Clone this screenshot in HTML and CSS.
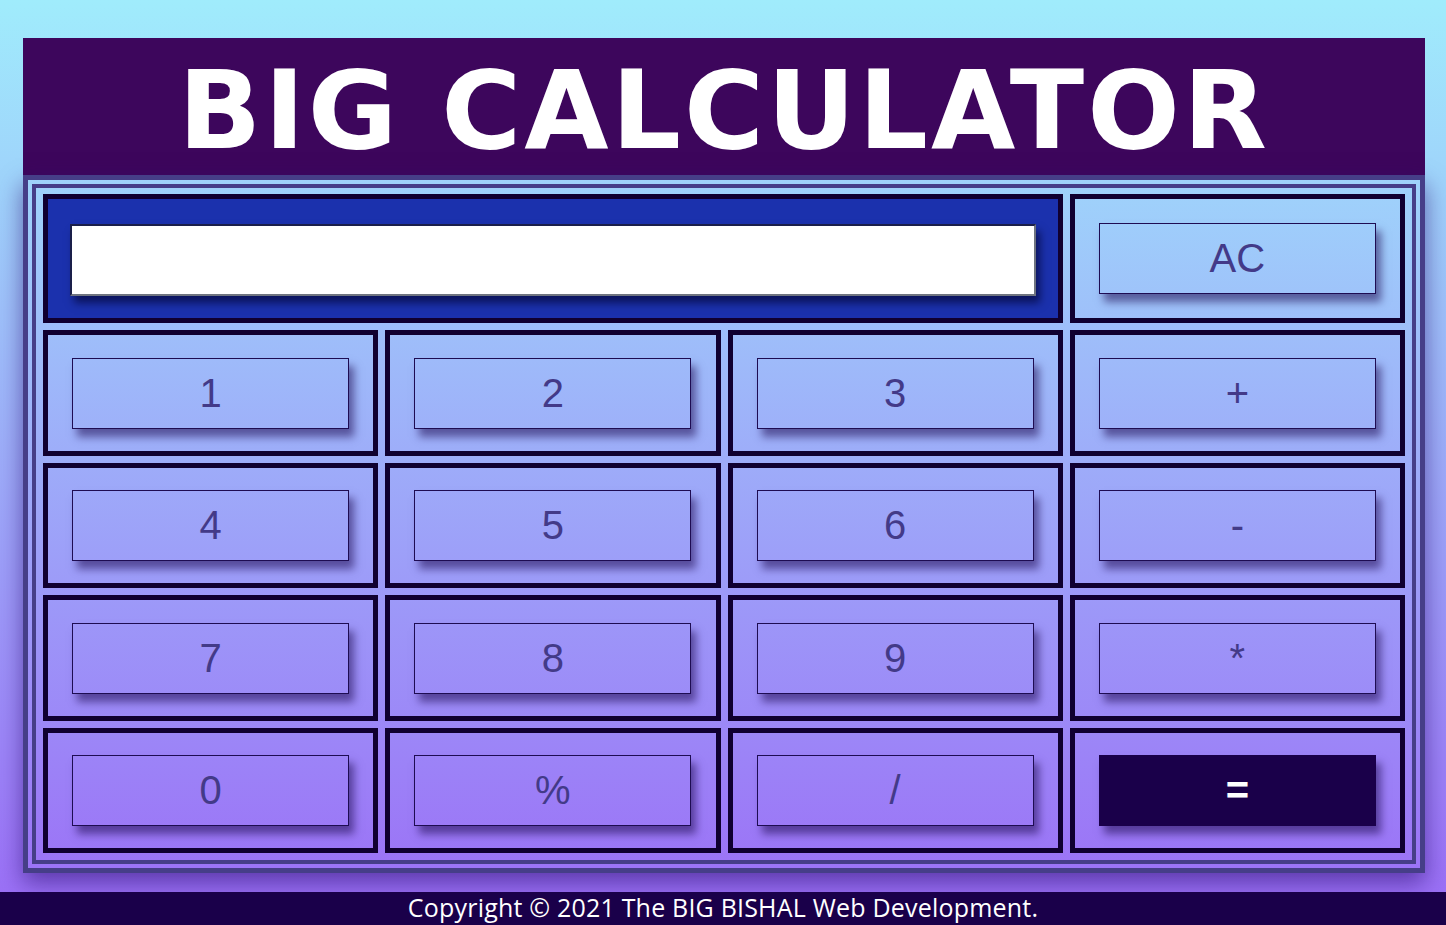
FILE: index.html
```html
<!DOCTYPE html>
<html lang="en">
<head>
<meta charset="utf-8">
<title>BIG CALCULATOR</title>
<link rel="stylesheet" href="styles.css">
</head>
<body>
<div class="page">
  <main class="calc">
    <h1 class="title">BIG CALCULATOR</h1>
    <div class="frame">
      <div class="keys">
        <div class="cell display-cell"><input class="display" type="text"></div>
        <div class="cell"><button class="key">AC</button></div>
        <div class="cell"><button class="key">1</button></div>
        <div class="cell"><button class="key">2</button></div>
        <div class="cell"><button class="key">3</button></div>
        <div class="cell"><button class="key">+</button></div>
        <div class="cell"><button class="key">4</button></div>
        <div class="cell"><button class="key">5</button></div>
        <div class="cell"><button class="key">6</button></div>
        <div class="cell"><button class="key">-</button></div>
        <div class="cell"><button class="key">7</button></div>
        <div class="cell"><button class="key">8</button></div>
        <div class="cell"><button class="key">9</button></div>
        <div class="cell"><button class="key">*</button></div>
        <div class="cell"><button class="key">0</button></div>
        <div class="cell"><button class="key">%</button></div>
        <div class="cell"><button class="key">/</button></div>
        <div class="cell"><button class="key key-equals">=</button></div>
      </div>
    </div>
  </main>
  <footer class="footer">Copyright © 2021 The BIG BISHAL Web Development.</footer>
</div>
</body>
</html>
```

FILE: styles.css
```css
html, body {
  margin: 0;
  padding: 0;
}

body {
  background: linear-gradient(to bottom, #a0ecfc 0%, #9b6cf6 100%);
  min-height: 925px;
  font-family: "Liberation Sans", Arial, sans-serif;
}

.page {
  display: flex;
  flex-direction: column;
  min-height: 925px;
  padding-top: 38px;
  box-sizing: border-box;
}

.calc {
  width: 1402px;
  margin: 0 21px 19px 23px;
}

.title {
  margin: 0;
  height: 137px;
  box-sizing: border-box;
  padding-top: 8px;
  background: #3d065c;
  color: #ffffff;
  font-family: "DejaVu Sans", Verdana, sans-serif;
  font-weight: bold;
  font-size: 109px;
  letter-spacing: 3px;
  line-height: 129px;
  text-align: center;
}

.frame {
  border: 5px solid #463e88;
  padding: 4px;
  box-shadow: 0 10px 22px rgba(40, 10, 110, 0.55);
}

.keys {
  border: 4px solid #463e88;
  padding: 6px 7px 7px 7px;
  display: grid;
  grid-template-columns: repeat(4, 1fr);
  grid-template-rows: 129px 126px 125px 126px 125px;
  gap: 7px;
}

.cell {
  border: 5px solid #100030;
  display: flex;
  align-items: center;
  justify-content: center;
}

.display-cell {
  grid-column: span 3;
  background: #1b31ad;
}

.display {
  width: 966px;
  height: 72px;
  box-sizing: border-box;
  border-style: solid;
  border-width: 2px;
  border-color: #1a1f4a #6f7480 #6f7480 #1a1f4a;
  background: #ffffff;
  box-shadow: 4px 7px 8px rgba(0, 0, 40, 0.6);
  font-size: 40px;
  padding: 0 10px;
  margin-top: 3px;
}

.key {
  width: 277px;
  height: 71px;
  background: transparent;
  border: 1px solid #1e0c52;
  color: #433a88;
  font-family: "Liberation Sans", Arial, sans-serif;
  font-size: 40px;
  box-shadow: 5px 8px 8px rgba(30, 10, 80, 0.55);
  padding: 0;
  cursor: pointer;
}

.key-equals {
  background: #1a004a;
  color: #ffffff;
  font-weight: bold;
  border-color: #1a004a;
}

.footer {
  margin-top: auto;
  height: 33px;
  box-sizing: border-box;
  padding-top: 0;
  background: #1a004a;
  color: #ffffff;
  font-family: "Open Sans", "Noto Sans", sans-serif;
  font-size: 25px;
  letter-spacing: 0.2px;
  line-height: 30px;
  text-align: center;
  overflow: hidden;
}
```
